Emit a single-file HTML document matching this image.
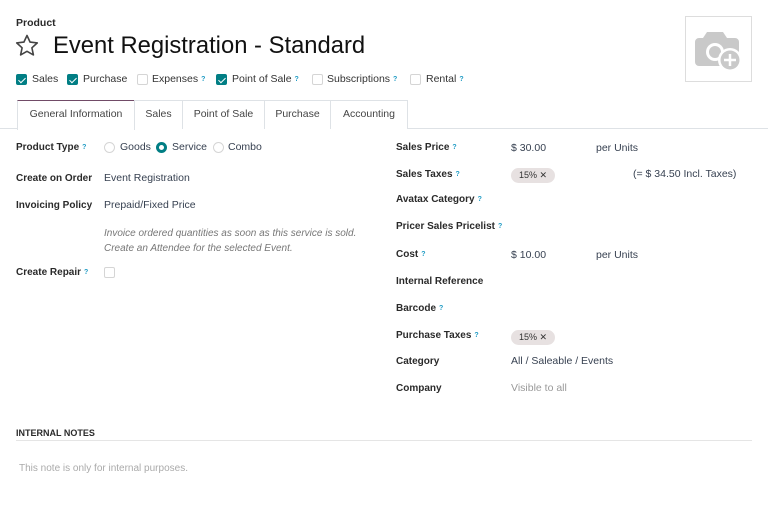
<!DOCTYPE html>
<html><head><meta charset="utf-8"><style>
*{margin:0;padding:0;box-sizing:border-box}
body{width:768px;height:517px;background:#fff;font-family:"Liberation Sans",sans-serif;color:#374151;position:relative;overflow:hidden;font-size:10.5px}
.a{position:absolute;white-space:nowrap;line-height:13px}
.b{font-weight:bold;color:#2a2a2a;font-size:10px}
.q{color:#1f9bc4;font-size:7px;vertical-align:top;margin-left:3px;font-weight:bold}
.cb{position:absolute;width:11px;height:11px;border:1px solid #d5d5d5;border-radius:2px;background:#fff}
.cb.on{background:#017e84;border-color:#017e84}
.cb.on:after{content:"";position:absolute;left:3px;top:1px;width:3px;height:6px;border:solid #fff;border-width:0 1.5px 1.5px 0;transform:rotate(45deg)}
.rd{position:absolute;width:11px;height:11px;border:1px solid #d5d5d5;border-radius:50%}
.rd.on{border:3px solid #017e84}
.tag{position:absolute;height:15px;background:#e7e1e1;border-radius:8px;font-size:9px;line-height:15px;padding:0 8px;color:#333}
.tab{position:absolute;top:100px;height:29px;border:1px solid #dee2e6;border-bottom:none;font-size:10.5px;line-height:27px;text-align:center;color:#444;background:#fff}
</style></head><body>
<div class="a b" style="left:16px;top:17px;font-size:10.5px">Product</div>
<svg style="position:absolute;left:15px;top:34px" width="24" height="23" viewBox="0 0 24 23"><path d="M12 1.5l3.1 6.6 7.2.8-5.4 4.9 1.5 7.1L12 17.3l-6.4 3.6 1.5-7.1L1.7 8.9l7.2-.8z" fill="none" stroke="#444" stroke-width="1.6" stroke-linejoin="round"/></svg>
<div class="a" style="left:53px;top:32px;font-size:23.8px;line-height:28px;color:#111">Event Registration - Standard</div>
<div style="position:absolute;left:685px;top:16px;width:67px;height:66px;border:1px solid #ddd;background:#fff"></div>
<svg style="position:absolute;left:693px;top:28px" width="52" height="46" viewBox="0 0 52 46"><path d="M14 4h16l4 6h8a4 4 0 0 1 4 4v20a4 4 0 0 1-4 4H6a4 4 0 0 1-4-4V14a4 4 0 0 1 4-4h4z" fill="#c9c9c9"/><circle cx="22" cy="24" r="9" fill="#fff"/><circle cx="22" cy="24" r="6" fill="#c9c9c9"/><circle cx="37" cy="32" r="12" fill="#fff"/><circle cx="37" cy="32" r="9.5" fill="#c9c9c9"/><path d="M37 26v12M31 32h12" stroke="#fff" stroke-width="2.5"/></svg>

<div class="cb on" style="left:16px;top:74px"></div><div class="a" style="left:32px;top:73px;color:#333">Sales</div>
<div class="cb on" style="left:67px;top:74px"></div><div class="a" style="left:83px;top:73px;color:#333">Purchase</div>
<div class="cb" style="left:137px;top:74px"></div><div class="a" style="left:152px;top:73px;color:#333">Expenses<span class="q">?</span></div>
<div class="cb on" style="left:216px;top:74px"></div><div class="a" style="left:232px;top:73px;color:#333">Point of Sale<span class="q">?</span></div>
<div class="cb" style="left:312px;top:74px"></div><div class="a" style="left:327px;top:73px;color:#333">Subscriptions<span class="q">?</span></div>
<div class="cb" style="left:410px;top:74px"></div><div class="a" style="left:426px;top:73px;color:#333">Rental<span class="q">?</span></div>

<div style="position:absolute;left:0;top:128px;width:768px;border-top:1px solid #dee2e6"></div>
<div class="tab" style="left:17px;width:118px;border-top:1px solid #714b67;height:30px">General Information</div>
<div class="tab" style="left:134px;width:49px">Sales</div>
<div class="tab" style="left:182px;width:83px">Point of Sale</div>
<div class="tab" style="left:264px;width:67px">Purchase</div>
<div class="tab" style="left:330px;width:78px">Accounting</div>

<div class="a b" style="left:16px;top:141px">Product Type<span class="q">?</span></div>
<div class="rd" style="left:104px;top:142px"></div><div class="a" style="left:120px;top:141px">Goods</div>
<div class="rd on" style="left:156px;top:142px"></div><div class="a" style="left:172px;top:141px">Service</div>
<div class="rd" style="left:213px;top:142px"></div><div class="a" style="left:228px;top:141px">Combo</div>
<div class="a b" style="left:16px;top:172px">Create on Order</div>
<div class="a" style="left:104px;top:172px">Event Registration</div>
<div class="a b" style="left:16px;top:199px">Invoicing Policy</div>
<div class="a" style="left:104px;top:199px">Prepaid/Fixed Price</div>
<div class="a" style="left:104px;top:226px;font-style:italic;color:#777;font-size:10px;line-height:15px">Invoice ordered quantities as soon as this service is sold.<br>Create an Attendee for the selected Event.</div>
<div class="a b" style="left:16px;top:266px">Create Repair<span class="q">?</span></div>
<div class="cb" style="left:104px;top:267px"></div>

<div class="a b" style="left:396px;top:141px">Sales Price<span class="q">?</span></div>
<div class="a" style="left:511px;top:142px">$ 30.00</div><div class="a" style="left:596px;top:142px">per Units</div>
<div class="a b" style="left:396px;top:168px">Sales Taxes<span class="q">?</span></div>
<div class="tag" style="left:511px;top:168px">15% ✕</div>
<div class="a" style="left:633px;top:168px">(= $ 34.50 Incl. Taxes)</div>
<div class="a b" style="left:396px;top:193px">Avatax Category<span class="q">?</span></div>
<div class="a b" style="left:396px;top:220px">Pricer Sales Pricelist<span class="q">?</span></div>
<div class="a b" style="left:396px;top:248px">Cost<span class="q">?</span></div>
<div class="a" style="left:511px;top:249px">$ 10.00</div><div class="a" style="left:596px;top:249px">per Units</div>
<div class="a b" style="left:396px;top:275px">Internal Reference</div>
<div class="a b" style="left:396px;top:302px">Barcode<span class="q">?</span></div>
<div class="a b" style="left:396px;top:329px">Purchase Taxes<span class="q">?</span></div>
<div class="tag" style="left:511px;top:330px">15% ✕</div>
<div class="a b" style="left:396px;top:355px">Category</div>
<div class="a" style="left:511px;top:355px">All / Saleable / Events</div>
<div class="a b" style="left:396px;top:382px">Company</div>
<div class="a" style="left:511px;top:382px;color:#999">Visible to all</div>

<div class="a b" style="left:16px;top:427px;font-size:9px">INTERNAL NOTES</div>
<div style="position:absolute;left:16px;top:440px;width:736px;border-top:1px solid #e5e5e5"></div>
<div class="a" style="left:19px;top:462px;color:#aaa;font-size:10px">This note is only for internal purposes.</div>
</body></html>
